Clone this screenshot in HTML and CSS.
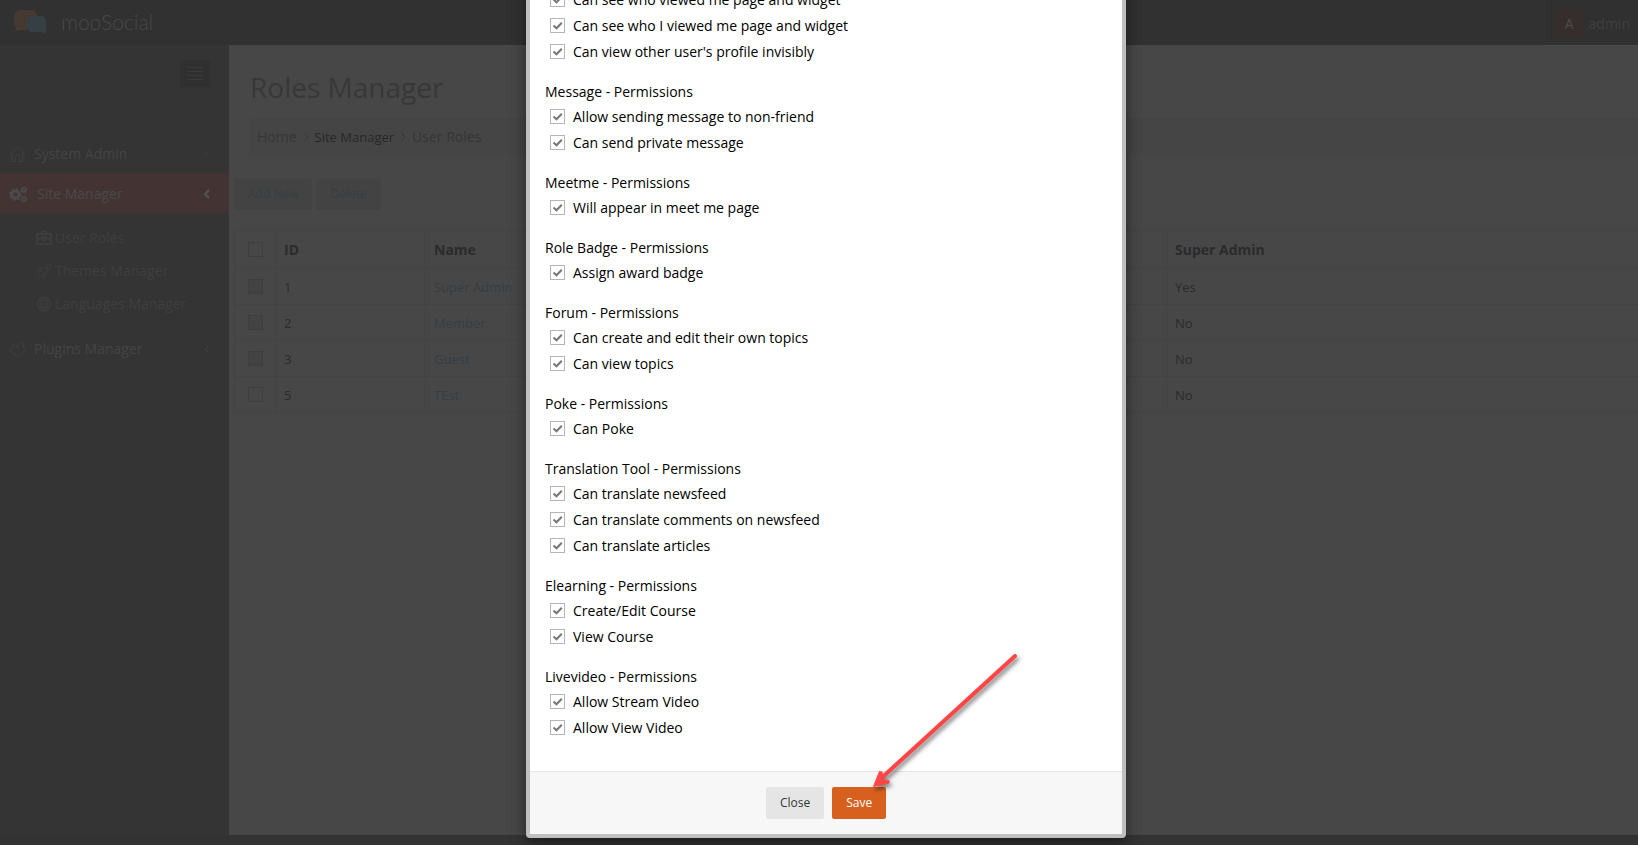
FILE: index.html
```html
<!DOCTYPE html>
<html lang="en">
<head>
<meta charset="utf-8">
<title>Roles Manager - mooSocial</title>
<link rel="stylesheet" href="styles.css">
</head>
<body>
<div class="page">
  <header class="topbar">
    <a class="brand" href="#">
      <svg class="brand-mark" viewBox="0 0 32 24" aria-hidden="true">
        <path fill="#453a32" d="M7 0h10c4 0 6 3 6 6h-4c-4 0-6 3-6 6v4c0 2 0 3 1 4H6c-2 0-3 1-5 2 1-2 1-3 1-4-1-2-2-4-2-7V7c0-4 3-7 7-7z"/>
        <path fill="#364044" d="M18 6h9c3 0 5 2 5 5v6c0 3-1 4 0 7-2-1-3-2-5-2h-9c-3 0-5-2-5-5v-6c0-3 2-5 5-5z"/>
      </svg>
      <span class="brand-name">mooSocial</span>
    </a>
    <button class="account" type="button">
      <span class="avatar">A</span>
      <span>admin</span>
      <svg class="chevron" viewBox="0 0 10 10" aria-hidden="true"><path d="M1 3l4 4 4-4"/></svg>
    </button>
  </header>

  <div class="columns">
    <nav class="sidebar">
      <button class="menu-toggle" type="button" aria-label="Toggle menu">
        <svg viewBox="0 0 16 14" aria-hidden="true"><path d="M0 .5h16M0 4.500h16M0 8.500h16M0 12.500h16"/></svg>
      </button>
      <a class="menu-item" href="#">
        <svg class="icon" viewBox="0 0 17 17" aria-hidden="true"><path d="M.5 9L8.500.8 16.500 9M3 7v8.500h3.500v-5a2 2 0 0 1 4 0v5H14V7"/></svg>
        <span>System Admin</span>
        <svg class="chevron" viewBox="0 0 10 10" aria-hidden="true"><path d="M7 1L3 5l4 4"/></svg>
      </a>
      <a class="menu-item current" href="#">
        <svg class="icon gears" viewBox="0 0 18 16" aria-hidden="true">
          <circle cx="6" cy="8" r="3.500" stroke-width="3"/><circle cx="6" cy="8" r="5.300" stroke-width="1.500" stroke-dasharray="2.100 2.060"/>
          <circle cx="14.200" cy="3.500" r="1.700" stroke-width="1.600"/><circle cx="14.200" cy="3.500" r="2.800" stroke-width="1" stroke-dasharray="1.200 1"/>
          <circle cx="14.200" cy="12.500" r="1.700" stroke-width="1.600"/><circle cx="14.200" cy="12.500" r="2.800" stroke-width="1" stroke-dasharray="1.200 1"/>
        </svg>
        <span>Site Manager</span>
        <svg class="chevron" viewBox="0 0 10 10" aria-hidden="true"><path d="M7 1L3 5l4 4"/></svg>
      </a>
      <div class="submenu">
        <a href="#"><svg class="icon" viewBox="0 0 16 16" aria-hidden="true"><path stroke-width="1.500" d="M1 4h14v10H1zM5.500 4V1.500h5V4M1 8.500h5M10 8.500h5M6.500 7h3v3h-3z"/></svg>User Roles</a>
        <a href="#"><svg class="icon" viewBox="0 0 16 16" aria-hidden="true"><path d="M15 1c-5 0-8 3-9.500 7L8 10.500c4-1.500 7-4.500 7-9.500zM6 6H3L1 9l4-.5M10 10v3l-3 2 .5-4.500M4 11c-2 0-3 2-3 4 2 0 4-1 4-3M11 4.500a1 1 0 1 0 .1 0"/></svg>Themes Manager</a>
        <a href="#"><svg class="icon" viewBox="0 0 16 16" aria-hidden="true"><circle cx="8" cy="8" r="7"/><ellipse cx="8" cy="8" rx="3.300" ry="7"/><path d="M8 1v14M1 8h14M2 4.500h12M2 11.500h12"/></svg>Languages Manager</a>
      </div>
      <a class="menu-item" href="#">
        <svg class="icon" viewBox="0 0 17 17" aria-hidden="true"><path d="M.7 9.500L4 6.500C2.500 3 5.500 1.500 7 4l.8.800L10 3c1-3.500 5.500-1.500 4.500 1L13.500 6c3-.5 3.500 3 1.500 4.500L9 16.300zM7 4c-.5 2 1 3.500 3 2.500"/></svg>
        <span>Plugins Manager</span>
        <svg class="chevron" viewBox="0 0 10 10" aria-hidden="true"><path d="M7 1L3 5l4 4"/></svg>
      </a>
    </nav>

    <main class="content">
      <h1>Roles Manager</h1>
      <nav class="crumbs" aria-label="Breadcrumb">
        <a href="#">Home</a>
        <svg class="chevron" viewBox="0 0 10 10" aria-hidden="true"><path d="M3 1l4 4-4 4"/></svg>
        <a class="crumb-dark" href="#">Site Manager</a>
        <svg class="chevron" viewBox="0 0 10 10" aria-hidden="true"><path d="M3 1l4 4-4 4"/></svg>
        <a href="#">User Roles</a>
      </nav>
      <div class="toolbar">
        <button type="button">Add New</button>
        <button type="button">Delete</button>
      </div>
      <table class="roles">
        <colgroup><col class="col-check"><col class="col-id"><col><col class="col-super"></colgroup>
        <thead>
          <tr><th><input class="box" type="checkbox" aria-label="Select all"></th><th>ID</th><th>Name</th><th>Super Admin</th></tr>
        </thead>
        <tbody>
          <tr><td><input class="box" type="checkbox" aria-label="Select role 1" disabled></td><td>1</td><td><a href="#">Super Admin</a></td><td>Yes</td></tr>
          <tr><td><input class="box" type="checkbox" aria-label="Select role 2" disabled></td><td>2</td><td><a href="#">Member</a></td><td>No</td></tr>
          <tr><td><input class="box" type="checkbox" aria-label="Select role 3" disabled></td><td>3</td><td><a href="#">Guest</a></td><td>No</td></tr>
          <tr><td><input class="box" type="checkbox" aria-label="Select role 5"></td><td>5</td><td><a href="#">TEst</a></td><td>No</td></tr>
        </tbody>
      </table>
    </main>
  </div>

  <div class="modal-layer">
    <form class="modal" role="dialog" aria-label="Role permissions">
      <div class="modal-body">
        <fieldset>
          <label><input type="checkbox" checked>Can see who viewed me page and widget</label>
          <label><input type="checkbox" checked>Can see who I viewed me page and widget</label>
          <label><input type="checkbox" checked>Can view other user's profile invisibly</label>
        </fieldset>
        <fieldset>
          <legend>Message - Permissions</legend>
          <label><input type="checkbox" checked>Allow sending message to non-friend</label>
          <label><input type="checkbox" checked>Can send private message</label>
        </fieldset>
        <fieldset>
          <legend>Meetme - Permissions</legend>
          <label><input type="checkbox" checked>Will appear in meet me page</label>
        </fieldset>
        <fieldset>
          <legend>Role Badge - Permissions</legend>
          <label><input type="checkbox" checked>Assign award badge</label>
        </fieldset>
        <fieldset>
          <legend>Forum - Permissions</legend>
          <label><input type="checkbox" checked>Can create and edit their own topics</label>
          <label><input type="checkbox" checked>Can view topics</label>
        </fieldset>
        <fieldset>
          <legend>Poke - Permissions</legend>
          <label><input type="checkbox" checked>Can Poke</label>
        </fieldset>
        <fieldset>
          <legend>Translation Tool - Permissions</legend>
          <label><input type="checkbox" checked>Can translate newsfeed</label>
          <label><input type="checkbox" checked>Can translate comments on newsfeed</label>
          <label><input type="checkbox" checked>Can translate articles</label>
        </fieldset>
        <fieldset>
          <legend>Elearning - Permissions</legend>
          <label><input type="checkbox" checked>Create/Edit Course</label>
          <label><input type="checkbox" checked>View Course</label>
        </fieldset>
        <fieldset>
          <legend>Livevideo - Permissions</legend>
          <label><input type="checkbox" checked>Allow Stream Video</label>
          <label><input type="checkbox" checked>Allow View Video</label>
        </fieldset>
      </div>
      <div class="modal-footer">
        <button class="btn" type="button">Close</button>
        <div class="save-wrap">
          <button class="btn btn-primary" type="submit">Save</button>
          <svg class="pointer" viewBox="0 0 160 150" aria-hidden="true">
            <path class="pointer-line" d="M142 15L9 136.500"/>
            <path class="pointer-head" d="M.5 145.500L6.500 130.500L9 131L9.500 136.500L13 140L16 139.500L16 142Z"/>
          </svg>
        </div>
      </div>
    </form>
  </div>
</div>
</body>
</html>
```
FILE: styles.css
```css
* { box-sizing: border-box; }

body {
  margin: 0;
  overflow: hidden;
  background: #333;
  color: #2b2b2b;
  font: 14px/20px "Open Sans", "Noto Sans", sans-serif;
}

a { color: inherit; text-decoration: none; }

button {
  border: 0;
  background: none;
  color: inherit;
  font: inherit;
}

svg { flex: none; fill: none; stroke: currentColor; }

.page {
  position: relative;
  display: flex;
  flex-direction: column;
  width: calc(100% + 14px);
  height: 100vh;
  padding-bottom: 10px;
  overflow: hidden;
}

/* Top bar */
.topbar {
  display: flex;
  flex: none;
  justify-content: space-between;
  height: 45px;
  background: #313131;
}

.brand {
  display: flex;
  align-items: center;
  gap: 15px;
  padding: 0 0 2px 14px;
}

.brand-mark { width: 32px; height: 24px; stroke: none; }

.brand-name {
  color: #484848;
  font: 300 21px/24px Lato, sans-serif;
}

.account {
  display: flex;
  align-items: center;
  gap: 5px;
  padding: 2px 5px 0 9px;
  background: #303030;
  color: #3f3f3f;
}

.avatar {
  width: 29px;
  background: #352e2d;
  color: #4c4c4c;
  line-height: 29px;
}

.chevron { width: 10px; height: 10px; }
.account .chevron { margin-left: 2px; }

.columns { display: flex; flex: 1; min-height: 0; }

/* Sidebar */
.sidebar {
  flex: none;
  width: 229px;
  background: #343434;
  color: #444;
}

.menu-toggle {
  display: flex;
  align-items: center;
  justify-content: center;
  width: 30px;
  height: 27px;
  margin: 15px 19px 46px auto;
  padding: 0;
  background: #303030;
  color: #393939;
}

.menu-toggle svg { width: 16px; height: 14px; }

.menu-item {
  display: flex;
  align-items: center;
  gap: 8px;
  height: 40px;
  padding: 2px 17px 0 9px;
}

.menu-item .icon { width: 17px; height: 17px; color: #404040; }
.menu-item .chevron { margin-left: auto; color: #3e3e3e; }

.menu-item.current { gap: 9px; background: #433433; color: #4a4a4a; }
.menu-item.current .icon { width: 19px; color: #4a4a4a; }
.menu-item.current .chevron { color: #555; stroke-width: 2; }

.submenu {
  margin: 7px 0 3px;
  padding-bottom: 4px;
  border-top: 1px solid #363636;
  border-bottom: 1px solid #363636;
  color: #3f3f3f;
}

.submenu a {
  display: flex;
  align-items: center;
  gap: 3px;
  height: 33px;
  padding-left: 36px;
}

.submenu .icon { width: 16px; height: 16px; }

/* Content */
.content {
  flex: 1;
  min-width: 0;
  padding: 22px 0 0 5px;
  background: #474747;
}

h1 {
  margin: 0 0 11px 16px;
  padding-left: 5px;
  color: #383838;
  font-size: 28px;
  font-weight: 400;
  line-height: 40px;
}

h1 { padding-left: 4px; margin-left: 12px; }

.crumbs {
  display: flex;
  align-items: center;
  gap: 4px;
  height: 37px;
  margin-left: 16px;
  padding-left: 7px;
  background: #454545;
  color: #363636;
}

.crumbs .crumb-dark { color: #282828; font-size: 13px; }

.toolbar { display: flex; gap: 4px; margin: 24px 0 20px; }

.toolbar button {
  padding: 5px 14px 6px;
  border-radius: 2px;
  background: #434343;
  color: #353e44;
  font-size: 12px;
}

.roles {
  width: 100%;
  border-collapse: collapse;
  table-layout: fixed;
}

.col-check { width: 41px; }
.col-id { width: 150px; }
.col-super { width: 485px; }

.roles th,
.roles td {
  height: 36px;
  padding: 0 8px;
  border: 1px solid #434343;
  font-size: 13px;
  text-align: left;
}

.roles th { height: 38px; font-size: 14px; }
.roles a { color: #353e44; }
.roles th:first-child,
.roles td:first-child { padding: 0 13px; }

.box {
  display: block;
  appearance: none;
  width: 15px;
  height: 15px;
  margin: 0;
  border: 1px solid #3e3e3e;
}

.box:disabled { background: #434343; }

/* Dialog */
.modal-layer {
  position: absolute;
  inset: 0;
  display: flex;
  align-items: flex-end;
  justify-content: center;
  padding-bottom: 7px;
}

.modal {
  width: 600px;
  border: 4px solid #bfbfbf;
  border-radius: 4px;
  background: #fff;
  box-shadow: 0 5px 15px rgba(0, 0, 0, 0.5);
  color: #000;
}

.modal-body { padding: 15px 15px 31px; }

fieldset {
  display: flex;
  flex-direction: column;
  gap: 1px;
  margin: 0 0 15px;
  padding: 0;
  border: 0;
}

fieldset:last-child { margin-bottom: 0; }

legend { padding: 0; line-height: 25px; }

fieldset label {
  display: flex;
  align-items: center;
  gap: 8px;
  padding-left: 5px;
  line-height: 25px;
}

fieldset input {
  appearance: none;
  width: 15px;
  height: 15px;
  margin: 0;
  border: 1px solid #b5b5b5;
  background: #fff;
}

fieldset input:checked {
  background: #fff url("data:image/svg+xml,%3Csvg xmlns='http://www.w3.org/2000/svg' viewBox='0 0 13 13'%3E%3Cpath d='M2.500 6.500L5.500 9.300L10.800 3.800' fill='none' stroke='%23777' stroke-width='2'/%3E%3C/svg%3E");
}

.modal-footer {
  display: flex;
  justify-content: center;
  gap: 8px;
  padding: 15px;
  border-top: 1px solid #e5e5e5;
  background: #f7f7f7;
}

.btn {
  padding: 6px 14px;
  border-radius: 2px;
  background: #e5e5e5;
  color: #333;
  font-size: 12px;
}

.btn-primary { background: #d8601e; color: #fff; }

.save-wrap { position: relative; }

.pointer {
  position: absolute;
  bottom: 28px;
  left: 41px;
  width: 160px;
  height: 150px;
  pointer-events: none;
  filter: drop-shadow(2px 3px 2px rgba(0, 0, 0, 0.5));
}

.pointer-line { stroke: #ff4545; stroke-width: 4; stroke-linecap: round; }
.pointer-head { fill: #ff4545; stroke: #ff4545; stroke-width: 1; stroke-linejoin: round; }
```
